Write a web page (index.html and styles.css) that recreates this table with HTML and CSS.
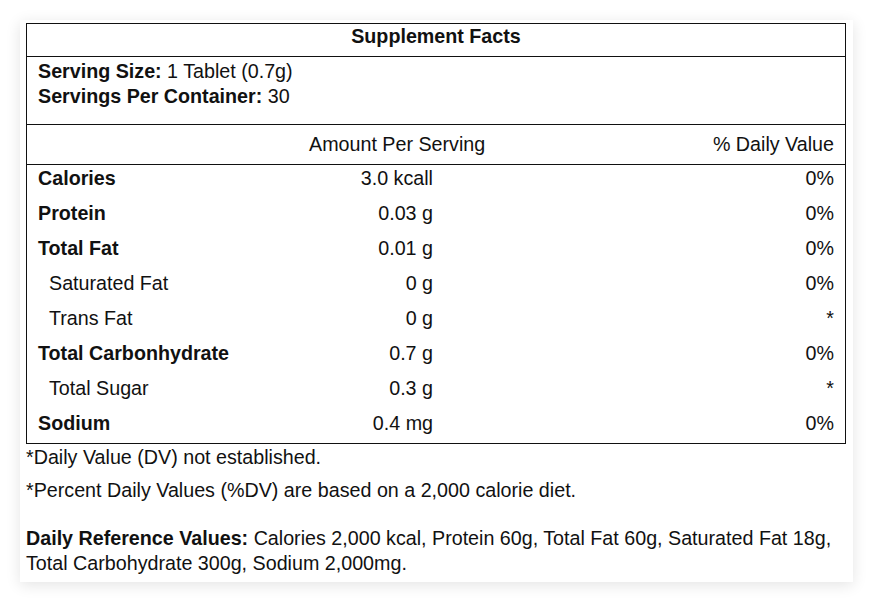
FILE: index.html
```html
<!DOCTYPE html>
<html lang="en">
<head>
<meta charset="utf-8">
<title>Supplement Facts</title>
<link rel="stylesheet" href="styles.css">
</head>
<body>
<div class="card">
  <div class="facts">
    <div class="title">Supplement Facts</div>
    <div class="serving">
      <div><b>Serving Size:</b> 1 Tablet (0.7g)</div>
      <div><b>Servings Per Container:</b> 30</div>
    </div>
    <div class="head">
      <span></span>
      <span>Amount Per Serving</span>
      <span class="dv">% Daily Value</span>
    </div>
    <div class="rows">
      <div class="row"><span class="name strong">Calories</span><span class="amt">3.0 kcall</span><span class="dv">0%</span></div>
      <div class="row"><span class="name strong">Protein</span><span class="amt">0.03 g</span><span class="dv">0%</span></div>
      <div class="row"><span class="name strong">Total Fat</span><span class="amt">0.01 g</span><span class="dv">0%</span></div>
      <div class="row"><span class="name sub">Saturated Fat</span><span class="amt">0 g</span><span class="dv">0%</span></div>
      <div class="row"><span class="name sub">Trans Fat</span><span class="amt">0 g</span><span class="dv">*</span></div>
      <div class="row"><span class="name strong">Total Carbonhydrate</span><span class="amt">0.7 g</span><span class="dv">0%</span></div>
      <div class="row"><span class="name sub">Total Sugar</span><span class="amt">0.3 g</span><span class="dv">*</span></div>
      <div class="row last"><span class="name strong">Sodium</span><span class="amt">0.4 mg</span><span class="dv">0%</span></div>
    </div>
  </div>
  <p class="note first">*Daily Value (DV) not established.</p>
  <p class="note second">*Percent Daily Values (%DV) are based on a 2,000 calorie diet.</p>
  <p class="note refs"><b>Daily Reference Values:</b> Calories 2,000 kcal, Protein 60g, Total Fat 60g, Saturated Fat 18g, Total Carbohydrate 300g, Sodium 2,000mg.</p>
</div>
</body>
</html>
```

FILE: styles.css
```css
html, body {
  margin: 0;
  padding: 0;
  background: #fff;
}
body {
  padding: 20px;
  font-family: "Liberation Sans", Arial, sans-serif;
  font-size: 19.7px;
  line-height: 25px;
  color: #111;
}
.card {
  width: 833px;
  box-sizing: border-box;
  padding: 3px 7px 6px 6px;
  background: #fff;
  box-shadow: 0 3px 14px rgba(0, 0, 0, 0.11);
}
.facts {
  border: 1px solid #111;
}
.title {
  text-align: center;
  font-weight: bold;
  padding: 0 0 7px;
  border-bottom: 1px solid #111;
}
.serving {
  padding: 2px 11px 15px;
  border-bottom: 1px solid #111;
}
.serving b {
  font-weight: bold;
}
.head {
  display: grid;
  grid-template-columns: 271px 1fr auto;
  padding: 7px 11px;
  border-bottom: 1px solid #111;
}
.row {
  display: grid;
  grid-template-columns: 262px 133px 1fr;
  padding: 1px 11px 9px;
}
.row.last {
  padding-bottom: 7px;
}
.strong {
  font-weight: bold;
}
.sub {
  padding-left: 11px;
}
.amt {
  text-align: right;
}
.dv {
  text-align: right;
}
.note {
  margin: 0;
}
.note.first {
  margin-top: 1px;
}
.note.second {
  margin-top: 8px;
}
.note.refs {
  margin-top: 23px;
}
```
